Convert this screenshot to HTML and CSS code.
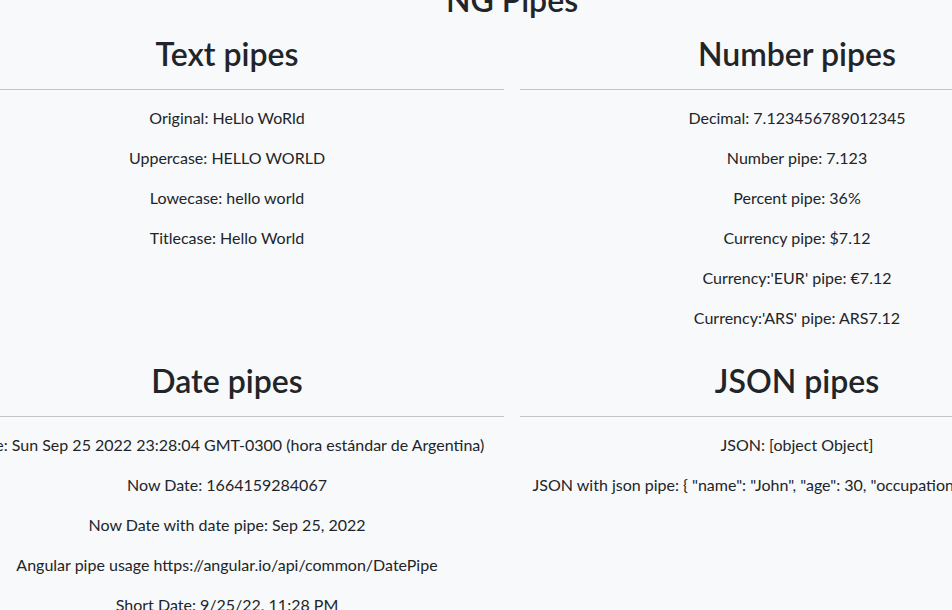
FILE: index.html
```html
<!DOCTYPE html>
<html lang="es">
<head>
<meta charset="utf-8">
<title>NG Pipes</title>
<link rel="stylesheet" href="styles.css">
</head>
<body>
<div class="page">
  <h1 class="title">NG Pipes</h1>
  <div class="row">
    <section class="col">
      <h2>Text pipes</h2>
      <hr>
      <p>Original: HeLlo WoRld</p>
      <p>Uppercase: HELLO WORLD</p>
      <p>Lowecase: hello world</p>
      <p>Titlecase: Hello World</p>
    </section>
    <section class="col">
      <h2>Number pipes</h2>
      <hr>
      <p>Decimal: 7.123456789012345</p>
      <p>Number pipe: 7.123</p>
      <p>Percent pipe: 36%</p>
      <p>Currency pipe: $7.12</p>
      <p>Currency:'EUR' pipe: €7.12</p>
      <p>Currency:'ARS' pipe: ARS7.12</p>
    </section>
  </div>
  <div class="row">
    <section class="col">
      <h2>Date pipes</h2>
      <hr>
      <p>Date: Sun Sep 25 2022 23:28:04 GMT-0300 (hora estándar de Argentina)</p>
      <p>Now Date: 1664159284067</p>
      <p>Now Date with date pipe: Sep 25, 2022</p>
      <p>Angular pipe usage https://angular.io/api/common/DatePipe</p>
      <p>Short Date: 9/25/22, 11:28 PM</p>
      <p>Medium Date: Sep 25, 2022, 11:28:04 PM</p>
      <p>Long Date: September 25, 2022 at 11:28:04 PM GMT-3</p>
    </section>
    <section class="col">
      <h2>JSON pipes</h2>
      <hr>
      <p>JSON: [object Object]</p>
      <p class="nowrap">JSON with json pipe: { "name": "John", "age": 30, "occupation": "Developer" }</p>
    </section>
  </div>
</div>
</body>
</html>
```

FILE: styles.css
```css
html, body {
  margin: 0;
  padding: 0;
}

body {
  background: #f8f9fa;
  color: #212529;
  font-family: "Lato", "Open Sans", sans-serif;
  font-size: 16px;
  line-height: 24px;
  overflow: hidden;
}

.page {
  width: 1140px;
  margin-left: -58px;
  margin-top: -19px;
}

.title {
  margin: 0;
  font-size: 32px;
  line-height: 38px;
  font-weight: 600;
  text-align: center;
}

.row {
  display: grid;
  grid-template-columns: 1fr 1fr;
}

.col {
  padding: 0 8px;
  text-align: center;
  min-width: 0;
}

.col h2 {
  margin: 16px 0 0;
  font-size: 32px;
  line-height: 38px;
  font-weight: 600;
}

.col hr {
  margin: 16px 0;
  border: 0;
  border-top: 1px solid #c2c4c6;
  height: 0;
}

.col p {
  margin: 0 0 16px;
}

.nowrap {
  white-space: nowrap;
}
```
